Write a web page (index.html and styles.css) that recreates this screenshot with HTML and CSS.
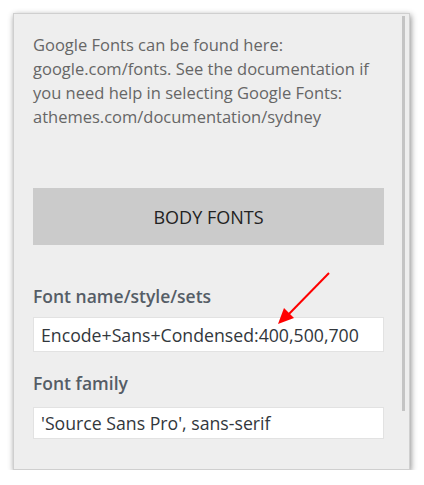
FILE: index.html
```html
<!DOCTYPE html>
<html>
<head>
<meta charset="utf-8">
<link rel="stylesheet" href="styles.css">
</head>
<body>
<div class="panel">
  <div class="content">
    <p class="desc">Google Fonts can be found here: google.com/fonts. See the documentation if you need help in selecting Google Fonts: athemes.com/documentation/sydney</p>
    <div class="section-title">BODY FONTS</div>
    <label class="field-label">Font name/style/sets</label>
    <div class="field field-first">Encode+Sans+Condensed:400,500,700</div>
    <label class="field-label">Font family</label>
    <div class="field field-second">'Source Sans Pro', sans-serif</div>
  </div>
  <div class="scrollbar"></div>
  <svg class="arrow" width="60" height="60" viewBox="0 0 60 60">
    <line x1="54" y1="3" x2="12" y2="46" stroke="#ff0000" stroke-width="2"/>
    <polygon points="3,54 9,38 19,48" fill="#ff0000"/>
  </svg>
</div>
</body>
</html>
```
FILE: styles.css
```css
html, body {
  margin: 0;
  padding: 0;
  background: #ffffff;
}
body {
  padding: 13px 0 0 13px;
  font-family: "Open Sans", "Noto Sans", sans-serif;
}
.panel {
  position: relative;
  width: 397px;
  height: 457px;
  box-sizing: border-box;
  background: #eeeeee;
  border: 1px solid #cfcfcf;
  box-shadow: 1px 2px 6px rgba(0, 0, 0, 0.45);
}
.content {
  padding: 19px 25px 0 19px;
  display: flex;
  flex-direction: column;
}
.desc {
  margin: 0;
  font-size: 16.5px;
  line-height: 24px;
  color: #666666;
}
.section-title {
  margin-top: 59px;
  height: 57px;
  background: #cbcbcb;
  display: flex;
  align-items: center;
  justify-content: center;
  font-size: 18px;
  color: #222222;
}
.field-label {
  margin-top: 41px;
  font-size: 17.5px;
  font-weight: 600;
  color: #555d66;
  line-height: 20px;
}
.field {
  box-sizing: border-box;
  background: #ffffff;
  border: 1px solid #e2e2e2;
  padding: 0 7px;
  display: flex;
  align-items: center;
  font-size: 17.7px;
  color: #32373c;
}
.field-first {
  margin-top: 11px;
  height: 35px;
}
.field-second {
  margin-top: 14px;
  height: 32px;
}
.field + .field-label {
  margin-top: 21px;
}
.scrollbar {
  position: absolute;
  top: 2px;
  right: 4px;
  width: 3px;
  height: 395px;
  background: #c4c4c4;
}
.arrow {
  position: absolute;
  left: 261px;
  top: 256px;
}
```
